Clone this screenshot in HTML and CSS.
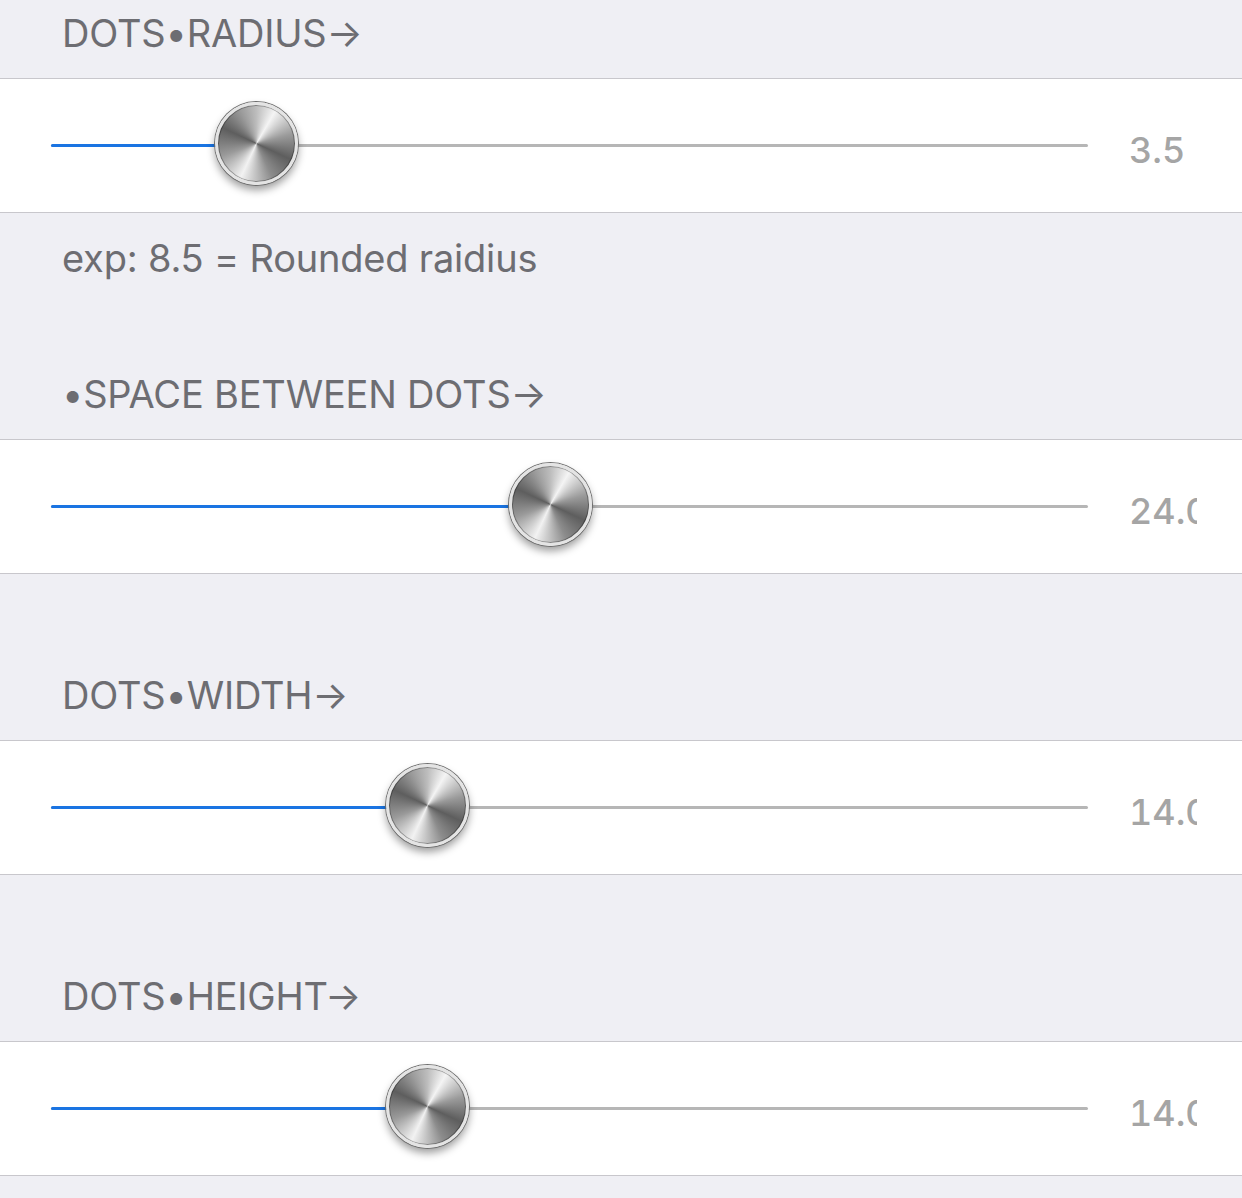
FILE: index.html
```html
<html>
<head>
	<title>Dots settings</title>
	<link rel="stylesheet" href="styles.css">
</head>

<body>

<main class="list">
	<div class="header first">DOTS•RADIUS→</div>
	<div class="cell">
		<div class="track" style="--v: 0.172">
			<div class="fill"></div>
			<div class="knob"></div>
		</div>
		<div class="value">3.5</div>
	</div>
	<div class="footer">exp: 8.5 = Rounded raidius</div>

	<div class="header after-footer">•SPACE BETWEEN DOTS→</div>
	<div class="cell">
		<div class="track" style="--v: 0.48">
			<div class="fill"></div>
			<div class="knob"></div>
		</div>
		<div class="value">24.0</div>
	</div>

	<div class="header">DOTS•WIDTH→</div>
	<div class="cell">
		<div class="track" style="--v: 0.351">
			<div class="fill"></div>
			<div class="knob"></div>
		</div>
		<div class="value">14.0</div>
	</div>

	<div class="header">DOTS•HEIGHT→</div>
	<div class="cell">
		<div class="track" style="--v: 0.351">
			<div class="fill"></div>
			<div class="knob"></div>
		</div>
		<div class="value">14.0</div>
	</div>
</main>

</body>

</html>
```

FILE: styles.css
```css
body {
	font-family: 'Inter', 'Helvetica', 'Arial', sans-serif;
	margin: 0;
	padding: 0;
	background-color: #efeff4;
}

.list {
	display: flex;
	flex-direction: column;
	min-height: 100vh;
}

.header,
.footer {
	color: #6d6d72;
	font-size: 38px;
	line-height: 47px;
	letter-spacing: -0.2px;
	padding: 98px 62px 21px;
	white-space: nowrap;
}

.header.first {
	padding-top: 10px;
}

.header.after-footer {
	padding-top: 89px;
}

.footer {
	padding: 22px 62px 0;
}

.cell {
	display: flex;
	align-items: center;
	height: 133px;
	background-color: #fff;
	border-top: 1px solid #c8c7cc;
	border-bottom: 1px solid #c8c7cc;
	padding-left: 51px;
}

/* slider */

.track {
	position: relative;
	width: 1037px;
	height: 3px;
	border-radius: 2px;
	background-color: #b6b6b6;
}

.fill {
	position: absolute;
	left: 0;
	top: 0;
	height: 100%;
	width: calc(var(--v) * (100% - 83px) + 41px);
	border-radius: 2px;
	background-color: #1a74e2;
}

.knob {
	position: absolute;
	top: -42px;
	left: calc(var(--v) * (100% - 83px));
	width: 83px;
	height: 83px;
	box-sizing: border-box;
	border-radius: 50%;
	border: 3px solid #e4e4e4;
	background: conic-gradient(from 0deg,
		#bdbdbd 0deg, #f4f4f4 30deg, #9a9a9a 75deg, #5e5e5e 115deg,
		#8c8c8c 155deg, #f2f2f2 205deg, #9a9a9a 250deg, #5e5e5e 295deg,
		#9c9c9c 335deg, #bdbdbd 360deg);
	box-shadow: 0 0 0 1px #6e6e6e, inset 0 0 0 1px rgba(0, 0, 0, 0.3), 0 5px 8px rgba(0, 0, 0, 0.4);
}

.value {
	width: 68px;
	margin-left: 41px;
	margin-top: 8px;
	overflow: hidden;
	white-space: nowrap;
	color: #a5a5a5;
	font-size: 36px;
	font-weight: 500;
	font-variant-numeric: tabular-nums;
}
```
